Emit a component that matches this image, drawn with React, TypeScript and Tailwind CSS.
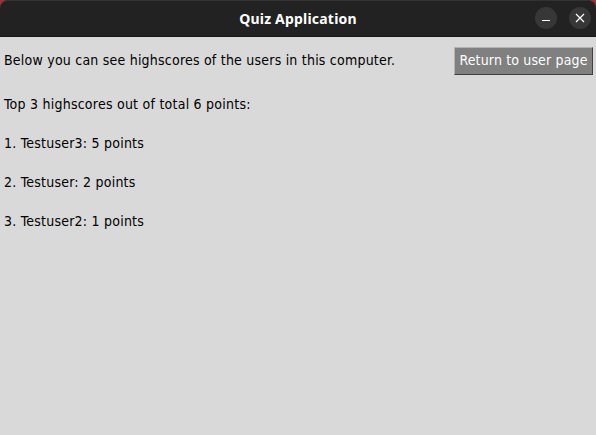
export default function App() {
  return (
    <div className="flex h-[435px] w-[596px] flex-col overflow-hidden bg-[#d9d9d9] font-['DejaVu_Sans_Condensed','DejaVu_Sans',sans-serif] text-[14px] leading-[19px] text-black [font-stretch:condensed]">
      <Titlebar />
      <main className="flex flex-col pt-[10px] pr-[3px] pl-1">
        <div className="flex h-7 items-start justify-between">
          <p className="pt-1 tracking-[0.22px]">Below you can see highscores of the users in this computer.</p>
          <button className="h-7 w-[139px] border border-t-[#b3b3b3] border-r-[#404040] border-b-[#404040] border-l-[#b3b3b3] bg-[#808080] pb-px text-center tracking-[0.15px] whitespace-nowrap text-white">
            Return to user page
          </button>
        </div>
        <p className="mt-5 tracking-[0.24px]">Top 3 highscores out of total 6 points:</p>
        <ol className="mt-5 flex flex-col gap-5 tracking-[0.23px]">
          <li>1. Testuser3: 5 points</li>
          <li>2. Testuser: 2 points</li>
          <li>3. Testuser2: 1 points</li>
        </ol>
      </main>
    </div>
  );
}

function Titlebar() {
  return (
    <div className="bg-[#a03038]">
      <header className="grid h-[37px] grid-cols-[1fr_auto_1fr] items-center rounded-t-[8px] border-t border-b border-t-[#323232] border-b-[#1a171a] bg-[#222222] text-white">
        <span />
        <h1 className="font-['Noto_Sans',sans-serif] text-[14px] font-bold tracking-[0.2px] [font-stretch:normal]">Quiz Application</h1>
        <div className="flex justify-end gap-3 pr-[5px]">
          <span className="flex size-[22px] -translate-y-px items-center justify-center rounded-full bg-[#373737]">
            <svg width="22" height="22" viewBox="0 0 22 22"><path d="M7 13.5h8" stroke="white" /></svg>
          </span>
          <span className="flex size-[22px] -translate-y-px items-center justify-center rounded-full bg-[#373737]">
            <svg width="22" height="22" viewBox="0 0 22 22"><path d="M7 7l8 8M15 7l-8 8" stroke="white" strokeWidth="1.3" /></svg>
          </span>
        </div>
      </header>
    </div>
  );
}
